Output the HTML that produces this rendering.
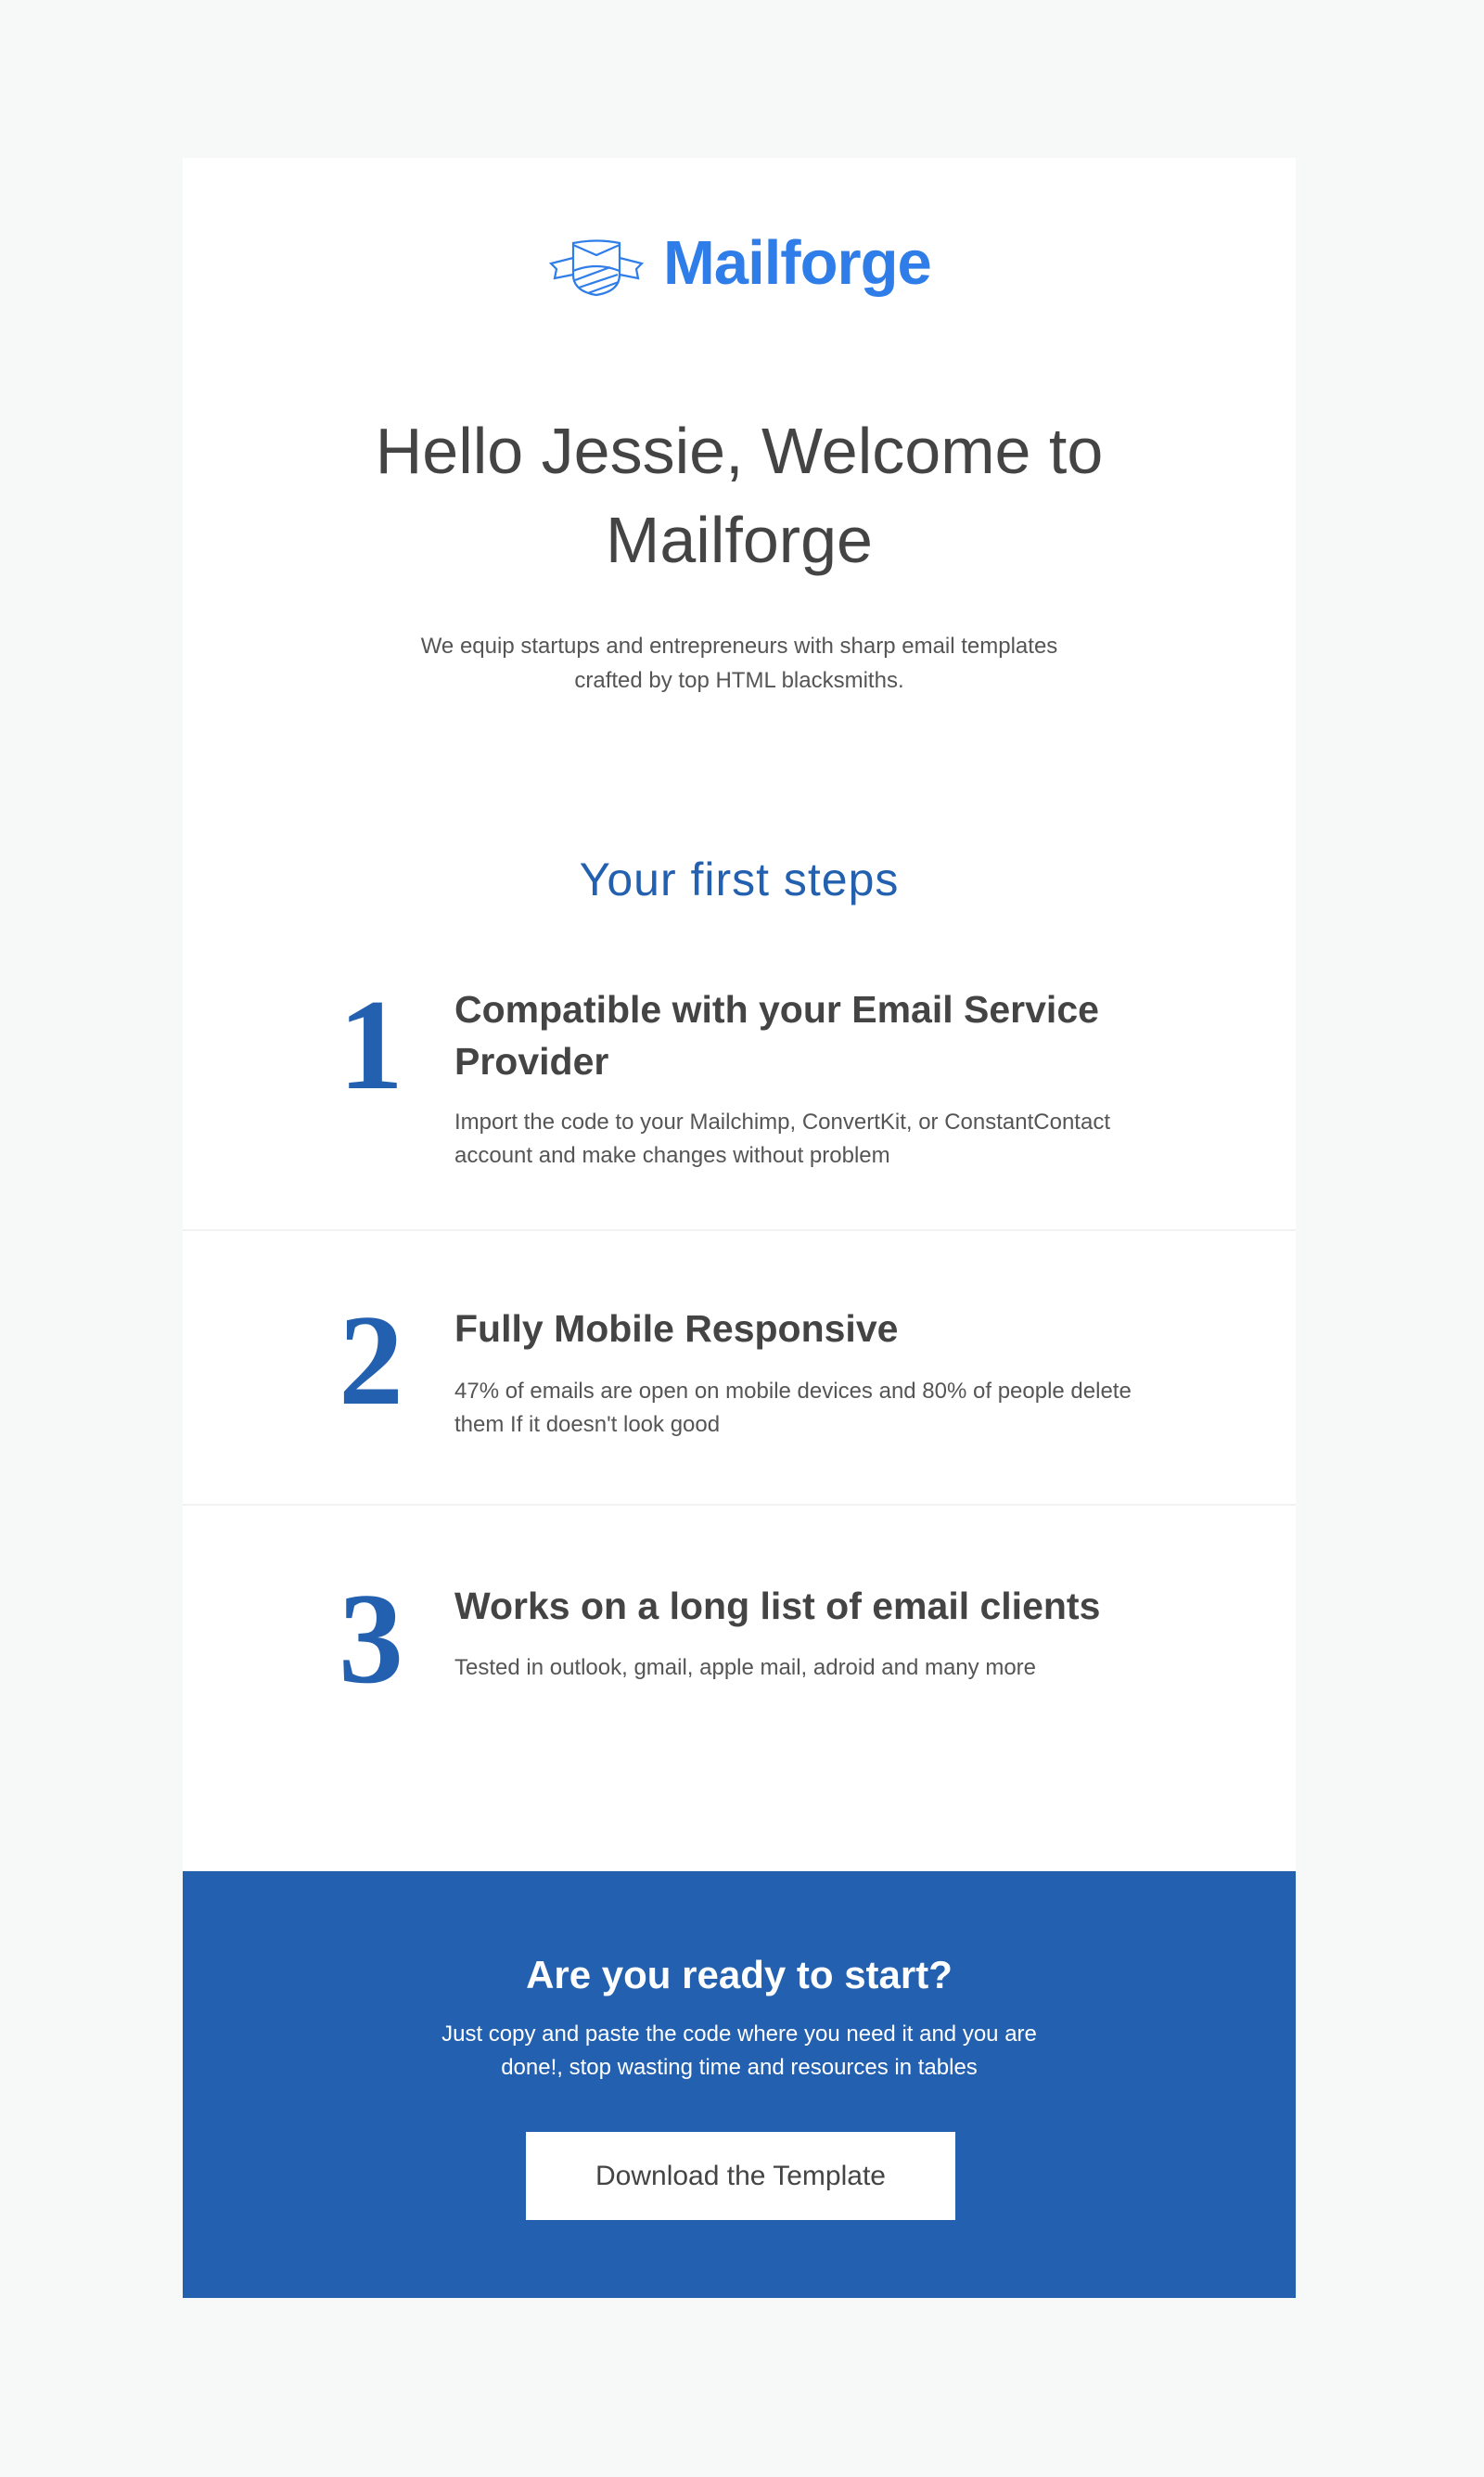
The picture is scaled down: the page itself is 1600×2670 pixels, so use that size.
<!DOCTYPE html>
<html><head><meta charset="utf-8"><style>
*{margin:0;padding:0;box-sizing:border-box}
body{width:1600px;height:2670px;background:#f7f8f8;font-family:"Liberation Sans",sans-serif;color:#444;position:relative;overflow:hidden}
.card{position:absolute;left:197px;top:170px;width:1200px;height:2307px;background:#fff}
.a{position:absolute}
.c{text-align:center;left:0;width:1200px}
.num{font-family:"Liberation Serif",serif;font-weight:bold;color:#2361b0;font-size:140px;line-height:1;left:168px}
.t{left:293px;font-weight:bold;font-size:41px;line-height:56px;color:#444;width:800px}
.d{left:293px;font-size:24px;line-height:36px;color:#555;width:760px}
.hr{left:0;width:1200px;height:2px;background:#f2f2f2}
</style></head><body>
<div class="card">
  <svg class="a" style="left:395px;top:88px" width="102" height="62" viewBox="0 0 102 62" fill="none" stroke="#2f7de8" stroke-width="2.2">
    <path d="M26 4 Q51 -1 76 4 L76 38 Q76 56 51 60 Q26 56 26 38 Z"/>
    <path d="M26 6 L51 17 L76 6"/>
    <path d="M26 34 Q51 24 76 34"/>
    <path d="M28 44 L66 30 M32 52 L74 38 M42 58 L75 46"/>
    <path d="M26 20 L2 26 L8 32 L6 42 L26 38"/>
    <path d="M76 20 L100 26 L94 32 L96 42 L76 38"/>
  </svg>
  <div class="a" style="left:518px;top:74px;font-size:67px;line-height:80px;color:#2f7de8;font-weight:bold;letter-spacing:-1px">Mailforge</div>
  <div class="a c" style="top:268px;font-size:70px;line-height:96px;color:#444">Hello Jessie, Welcome to<br>Mailforge</div>
  <div class="a c" style="top:508px;font-size:24px;line-height:37px;color:#555">We equip startups and entrepreneurs with sharp email templates<br>crafted by top HTML blacksmiths.</div>
  <div class="a c" style="top:746px;font-size:50px;line-height:64px;color:#2361b0;letter-spacing:1px">Your first steps</div>

  <div class="a num" style="top:887px">1</div>
  <div class="a t" style="top:890px">Compatible with your Email Service Provider</div>
  <div class="a d" style="top:1022px">Import the code to your Mailchimp, ConvertKit, or ConstantContact account and make changes without problem</div>
  <div class="a hr" style="top:1155px"></div>

  <div class="a num" style="top:1227px">2</div>
  <div class="a t" style="top:1234px">Fully Mobile Responsive</div>
  <div class="a d" style="top:1312px">47% of emails are open on mobile devices and 80% of people delete them If it doesn't look good</div>
  <div class="a hr" style="top:1451px"></div>

  <div class="a num" style="top:1527px">3</div>
  <div class="a t" style="top:1533px">Works on a long list of email clients</div>
  <div class="a d" style="top:1610px">Tested in outlook, gmail, apple mail, adroid and many more</div>

  <div class="a" style="left:0;top:1847px;width:1200px;height:460px;background:#2361b0">
    <div class="a c" style="top:84px;font-size:42px;line-height:56px;color:#fff;font-weight:bold">Are you ready to start?</div>
    <div class="a c" style="top:158px;font-size:24px;line-height:36px;color:#fff">Just copy and paste the code where you need it and you are<br>done!, stop wasting time and resources in tables</div>
    <div class="a" style="left:370px;top:281px;width:463px;height:95px;background:#fff;color:#444;font-size:30px;line-height:95px;text-align:center">Download the Template</div>
  </div>
</div>
</body></html>
